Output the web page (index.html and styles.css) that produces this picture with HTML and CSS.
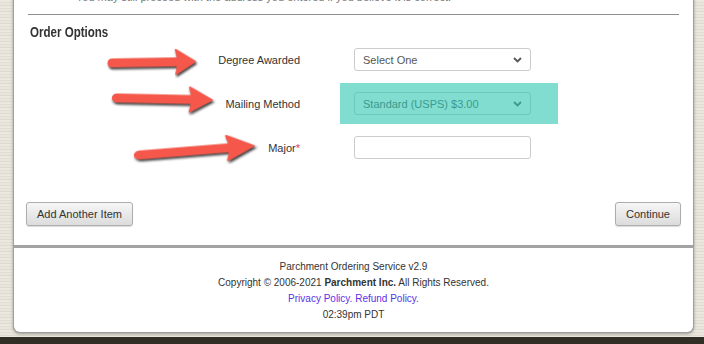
FILE: index.html
```html
<!doctype html>
<html>
<head>
<meta charset="utf-8">
<title>Order Options</title>
<link rel="stylesheet" href="styles.css">
</head>
<body>
<div class="page">
	<div class="panel">
		<div class="main">
			<p class="notice">You may still proceed with the address you entered if you believe it is correct.</p>
			<div class="rule"></div>
			<h2 class="section">Order Options</h2>
			<div class="form">
				<label class="lbl">Degree Awarded</label>
				<div class="select"><span>Select One</span><svg class="chev" width="9" height="6" viewBox="0 0 9 6"><path d="M1 1 L4.5 4.5 L8 1" fill="none" stroke="#555" stroke-width="1.8"/></svg></div>

				<label class="lbl">Mailing Method</label>
				<div class="select mark"><span>Standard (USPS) $3.00</span><svg class="chev" width="9" height="6" viewBox="0 0 9 6"><path d="M1 1 L4.5 4.5 L8 1" fill="none" stroke="#555" stroke-width="1.8"/></svg><div class="hl"></div></div>

				<label class="lbl">Major<span class="req">*</span></label>
				<input class="field" type="text">
			</div>
			<div class="actions">
				<button class="btn">Add Another Item</button>
				<button class="btn">Continue</button>
			</div>
		</div>
		<div class="footer">
			<div>Parchment Ordering Service v2.9</div>
			<div>Copyright &copy; 2006-2021 <b>Parchment Inc.</b> All Rights Reserved.</div>
			<div><a href="#">Privacy Policy.</a> <a href="#">Refund Policy.</a></div>
			<div>02:39pm PDT</div>
		</div>
	</div>
	<div class="ground"></div>

	<!-- annotation arrows -->
	<svg class="arrows" width="704" height="344" viewBox="0 0 704 344">
		<defs>
			<g id="arw">
				<line x1="0" y1="0" x2="67" y2="0" stroke="#f5584b" stroke-width="9" stroke-linecap="round"/>
				<path d="M64 -12 L83 0 L64 12 Q68 0 64 -12 Z" fill="#f5584b" stroke="#f5584b" stroke-width="2" stroke-linejoin="round"/>
			</g>
		</defs>
		<g class="ar" transform="translate(112 63) rotate(-1)"><use href="#arw"/></g>
		<g class="ar" transform="translate(117 98) rotate(1.2) scale(1.14 1)"><use href="#arw"/></g>
		<g class="ar" transform="translate(140 155) rotate(-4.6) scale(1.37 1)"><use href="#arw"/></g>
	</svg>
</div>
</body>
</html>
```
FILE: styles.css
```css
*{margin:0; padding:0; box-sizing:border-box;}
html,body{height:100%; overflow:hidden;}
body{font-family:"Liberation Sans", Arial, sans-serif; background:#e8e4da;
	background-image:repeating-linear-gradient(180deg, #ebe8df 0 2px, #e2ded3 2px 3px, #e9e5dc 3px 5px, #dedacf 5px 6px);}

.page{position:relative; display:flow-root; padding:0 10px 0 13px;}
.panel{margin-top:-10px; background:#fff; border:1px solid #a0a0a0; border-top:0; border-radius:0 0 7px 7px; box-shadow:0 1px 3px rgba(0,0,0,.35);}
.main{padding:0 14px 19px 14px;}

.notice{font-size:11px; line-height:14px; color:#777; padding-left:48px; margin-bottom:10px; white-space:nowrap;}
.rule{height:1px; background:#8e8e8e;}
.section{font-weight:bold; font-size:15px; line-height:18px; color:#333; margin:8px 0 7px 2px; transform:scaleX(0.77); transform-origin:left center;}

.form{display:grid; grid-template-columns:272px 177px; column-gap:54px; row-gap:21px; align-items:center;}
.lbl{font-size:11px; color:#333; text-align:right; white-space:nowrap;}
.req{color:#e8336b;}
.select{position:relative; height:23px; border:1px solid #ccc; border-radius:3px; background:#fff; display:flex; align-items:center; justify-content:space-between; padding:0 8px; font-size:11px; color:#555;}
.field{height:23px; border:1px solid #ccc; border-radius:3px; background:#fff; font-size:11px;}
.mark .hl{position:absolute; left:-15px; right:-28px; top:-10px; bottom:-10px; background:rgba(43,198,177,.6);}

.actions{display:flex; justify-content:space-between; margin:43px -2px 0;}
.btn{height:24px; padding:0 10px; font-family:"Liberation Sans", Arial, sans-serif; font-size:11px; color:#333; border:1px solid #adadad; border-radius:3px; background:linear-gradient(#f6f6f6, #dcdcdc); box-shadow:0 1px 1px rgba(0,0,0,.15);}

.footer{border-top:3px solid #a3a3a3; padding:11px 0 9px; text-align:center; font-size:10px; line-height:16px; color:#333;}
.footer a{color:#5a32e8; text-decoration:none;}
.footer b{font-weight:bold;}

.ground{margin:4px -10px 0 -13px; height:20px; background:#2f2f26;}

.arrows{position:absolute; left:0; top:0; pointer-events:none;}
.ar{filter:drop-shadow(1px 2px 1.2px rgba(0,0,0,.75));}
```
